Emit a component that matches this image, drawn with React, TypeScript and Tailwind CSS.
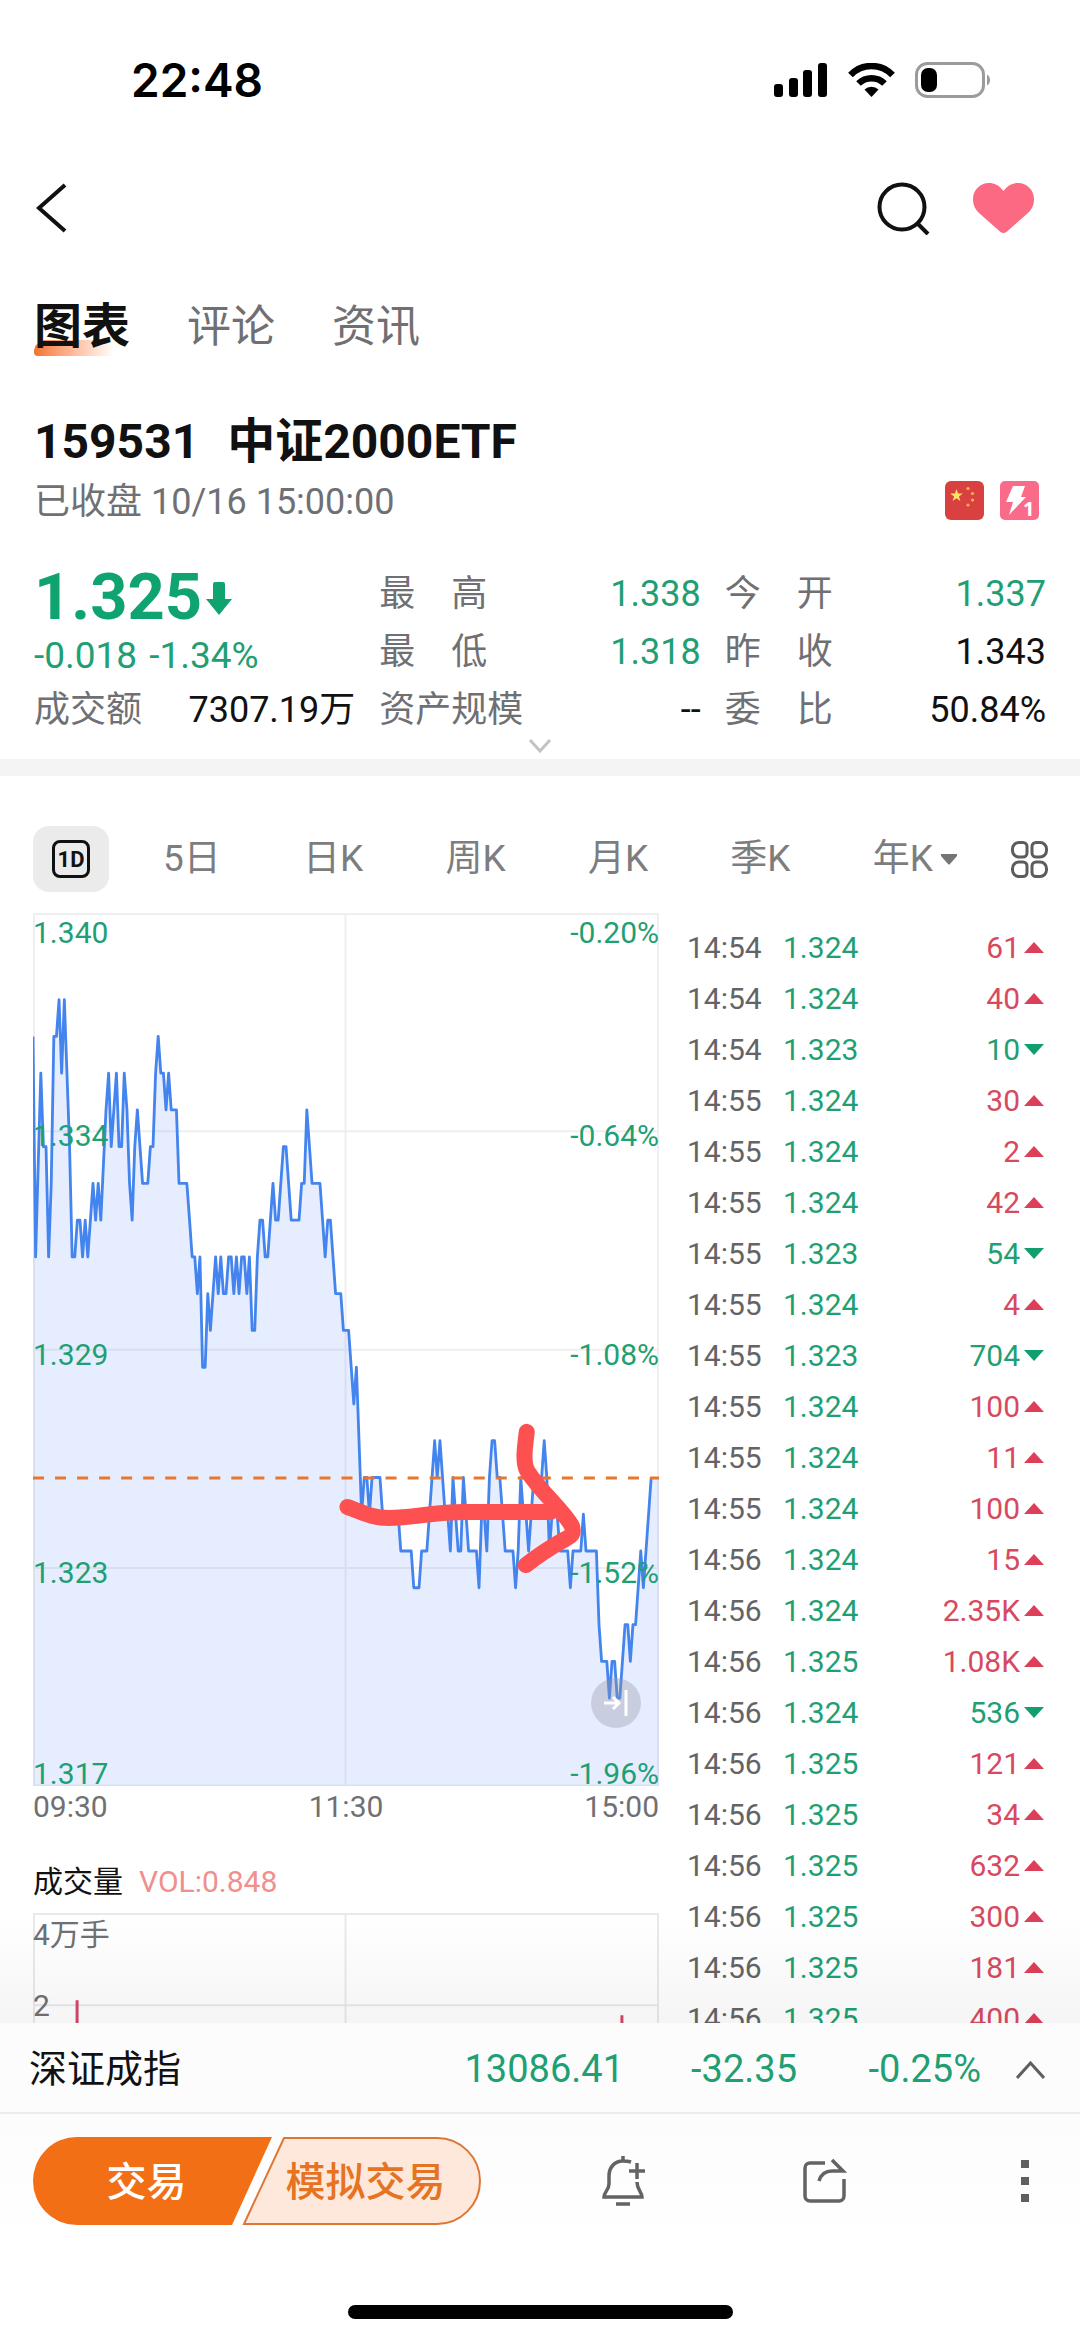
import React, { useState } from 'react';
import clsx from 'clsx';

// [minute, price in 0.001 above 1.300]
const PRICES: [number, number][] = [
  [0, 37], [1, 31], [3, 36], [4, 34], [5, 34], [6, 31], [7, 33], [8, 37], [9, 37], [10, 38], [11, 36], [12, 38],
  [14, 34], [15, 31], [16, 31], [17, 32], [18, 32], [19, 31], [20, 32], [21, 31], [23, 33], [24, 32], [25, 33],
  [26, 32], [28, 35], [29, 36], [30, 34], [32, 36], [33, 34], [34, 34], [35, 36], [36, 35], [37, 33], [38, 32],
  [39, 34], [40, 35], [41, 34], [42, 33], [44, 33], [45, 34], [46, 34], [47, 36], [48, 37], [49, 36], [50, 36],
  [51, 35], [52, 36], [53, 35], [55, 35], [56, 33], [59, 33], [60, 32], [61, 31], [62, 31], [63, 30], [64, 31],
  [65, 28], [66, 28], [67, 30], [68, 29], [69, 30], [70, 31], [71, 30], [72, 31], [73, 30], [74, 30], [75, 31],
  [76, 31], [77, 30], [78, 31], [79, 30], [80, 31], [81, 31], [82, 30], [83, 31], [84, 29], [85, 29], [86, 31],
  [87, 32], [88, 32], [89, 31], [90, 31], [91, 32], [92, 33], [93, 32], [94, 32], [95, 33], [96, 34], [97, 34],
  [98, 33], [99, 32], [102, 32], [103, 33], [104, 33], [105, 35], [106, 34], [107, 33], [110, 33], [111, 32],
  [112, 31], [113, 32], [114, 32], [115, 31], [116, 30], [118, 30], [119, 29], [121, 29], [122, 28], [123, 27],
  [124, 28], [126, 24], [127, 25], [128, 25], [129, 24], [130, 25], [133, 25], [134, 24], [140, 24], [141, 23],
  [145, 23], [146, 22], [148, 22], [149, 23], [151, 23], [152, 24], [153, 25], [154, 26], [155, 25], [156, 26],
  [157, 25], [158, 24], [159, 24], [160, 23], [161, 25], [162, 24], [163, 23], [164, 23], [165, 25], [166, 24],
  [167, 23], [170, 23], [171, 22], [172, 24], [173, 24], [174, 23], [175, 25], [176, 26], [177, 26], [178, 25],
  [179, 25], [180, 24], [181, 23], [184, 23], [185, 22], [186, 23], [187, 25], [188, 24], [189, 24], [190, 23],
  [191, 24], [192, 25], [195, 25], [196, 26], [197, 25], [198, 23], [199, 24], [201, 24], [202, 23], [205, 23],
  [206, 22], [207, 23], [210, 23], [211, 24], [212, 23], [216, 23], [217, 21], [218, 20], [220, 20], [221, 19],
  [222, 20], [223, 20], [224, 19], [225, 19], [226, 20], [227, 21], [228, 21], [229, 20], [230, 21], [231, 21],
  [232, 22], [233, 23], [234, 22], [235, 23], [236, 24], [237, 25], [240, 25],
];

const TRADES: [string, string, string, 'up' | 'down'][] = [
  ['14:54', '1.324', '61', 'up'],
  ['14:54', '1.324', '40', 'up'],
  ['14:54', '1.323', '10', 'down'],
  ['14:55', '1.324', '30', 'up'],
  ['14:55', '1.324', '2', 'up'],
  ['14:55', '1.324', '42', 'up'],
  ['14:55', '1.323', '54', 'down'],
  ['14:55', '1.324', '4', 'up'],
  ['14:55', '1.323', '704', 'down'],
  ['14:55', '1.324', '100', 'up'],
  ['14:55', '1.324', '11', 'up'],
  ['14:55', '1.324', '100', 'up'],
  ['14:56', '1.324', '15', 'up'],
  ['14:56', '1.324', '2.35K', 'up'],
  ['14:56', '1.325', '1.08K', 'up'],
  ['14:56', '1.324', '536', 'down'],
  ['14:56', '1.325', '121', 'up'],
  ['14:56', '1.325', '34', 'up'],
  ['14:56', '1.325', '632', 'up'],
  ['14:56', '1.325', '300', 'up'],
  ['14:56', '1.325', '181', 'up'],
  ['14:56', '1.325', '400', 'up'],
];

const AXIS = [
  { price: '1.340', pct: '-0.20%', pos: 'top-1' },
  { price: '1.334', pct: '-0.64%', pos: 'top-1/4 -translate-y-1/3' },
  { price: '1.329', pct: '-1.08%', pos: 'top-1/2 -translate-y-1/3' },
  { price: '1.323', pct: '-1.52%', pos: 'top-3/4 -translate-y-1/3' },
  { price: '1.317', pct: '-1.96%', pos: '-bottom-1' },
];

const PERIODS = ['5日', '日K', '周K', '月K', '季K', '年K'];

const CHART_W = 625;
const CHART_H = 872;

const StatusBar: React.FC = () => (
  <div className="flex h-[160px] shrink-0 items-center justify-between pl-[131px] pr-[89px]">
    <span className="font-['Inter',sans-serif] text-[46px] font-semibold text-black">22:48</span>
    <div className="flex items-center gap-5">
      <svg width="54" height="34" viewBox="0 0 54 34" fill="#000">
        <rect x="0" y="21" width="9" height="13" rx="3" />
        <rect x="15" y="15" width="9" height="19" rx="3" />
        <rect x="29" y="7" width="9" height="27" rx="3" />
        <rect x="44" y="0" width="9" height="34" rx="3" />
      </svg>
      <svg width="47" height="34" viewBox="0 0 47 34" fill="none" stroke="#000" strokeWidth="6.500">
        <path d="M2.500 12a29 29 0 0 1 42 0" />
        <path d="M10.500 20.500a18.500 18.500 0 0 1 26 0" />
        <path d="M23.500 34l-7-7.500a10 10 0 0 1 14 0z" fill="#000" stroke="none" />
      </svg>
      <svg width="76" height="36" viewBox="0 0 76 36" fill="none">
        <rect x="1.500" y="1.500" width="67" height="33" rx="11" stroke="#9b9b9b" strokeWidth="3" />
        <rect x="6" y="6" width="16" height="24" rx="7" fill="#000" />
        <path d="M72 12.500c4 2 4 9 0 11z" fill="#9b9b9b" />
      </svg>
    </div>
  </div>
);

const Header: React.FC = () => (
  <header className="flex h-24 shrink-0 items-center justify-between pl-[35px] pr-[46px]">
    <button aria-label="返回">
      <svg width="32" height="50" viewBox="0 0 32 50" fill="none" stroke="#111" strokeWidth="4">
        <path d="M30 2L4 25l26 23" />
      </svg>
    </button>
    <div className="flex items-center gap-[42px]">
      <button aria-label="搜索">
        <svg width="54" height="54" viewBox="0 0 54 54" fill="none" stroke="#111" strokeWidth="4">
          <circle cx="25" cy="26" r="22.500" />
          <path d="M40 42l11 11" />
        </svg>
      </button>
      <button aria-label="取消自选">
        <svg width="61" height="50" viewBox="0 0 61 50" fill="#fb6983">
          <path d="M30.500 8C26 2 21 0 16 0 7 0 0 7 0 16c0 6 2 10 6 14l21.500 19q3 2 6 0L55 30c4-4 6-8 6-14C61 7 54 0 45 0c-5 0-10 2-14.500 8z" />
        </svg>
      </button>
    </div>
  </header>
);

const PageTabs: React.FC = () => (
  <nav className="flex h-[142px] shrink-0 items-center gap-[57px] px-[34px] text-[44px] text-[#707072]">
    <button className="relative text-[48px] font-bold text-[#111]">
      <span className="absolute bottom-[7px] left-0 h-4 w-20 rounded-bl-[4px] rounded-tl-xl bg-gradient-to-r from-[#f2722b] to-white" />
      <span className="relative">图表</span>
    </button>
    <button>评论</button>
    <button>资讯</button>
  </nav>
);

interface QuoteProps {
  label: string;
  value: string;
  color?: string;
}

const Quote: React.FC<QuoteProps> = ({ label, value, color = 'text-[#111]' }) => (
  <div className="flex h-[58px] items-center justify-between">
    <dt className="whitespace-pre text-[#6f7074]">{label}</dt>
    <dd className={color}>{value}</dd>
  </div>
);

const Summary: React.FC = () => (
  <section className="px-[34px] pt-[14px] text-[36px]">
    <h1 className="flex gap-[28px] text-[48px] font-bold leading-[60px] text-[#111]">
      <span>159531</span>
      <span>中证2000ETF</span>
    </h1>
    <div className="flex h-[60px] items-center justify-between pr-[7px]">
      <span className="text-[#6f7074]">已收盘 10/16 15:00:00</span>
      <div className="flex gap-4 pb-1">
        <svg width="39" height="39" viewBox="0 0 39 39">
          <rect width="39" height="39" rx="6" fill="#d94040" />
          <path d="M11.500 8l1.500 4.600h4.800l-3.900 2.800 1.500 4.600-3.900-2.800-3.900 2.800 1.500-4.600-3.900-2.800H10z" fill="#ffe268" />
          <g fill="#f3b153">
            <circle cx="23" cy="7.500" r="1.600" />
            <circle cx="27.500" cy="12.500" r="1.600" />
            <circle cx="27.500" cy="19" r="1.600" />
            <circle cx="23" cy="24" r="1.600" />
          </g>
        </svg>
        <svg width="39" height="39" viewBox="0 0 39 39">
          <rect width="39" height="39" rx="5" fill="#f96b89" />
          <path d="M13 5h12l-4 11h5L9 34l4-13H6z" fill="#fff" />
          <text x="23" y="35" fill="#fff" fontSize="20" fontWeight="700" fontFamily="Noto Sans, sans-serif">1</text>
        </svg>
      </div>
    </div>
    <div className="mt-[33px] grid grid-cols-3 gap-x-6">
      <div>
        <div className="flex h-[66px] items-center gap-1 text-[65px] font-bold text-[#0fa36f]">
          <span>1.325</span>
          <svg width="26" height="33" viewBox="0 0 26 33" fill="#0fa36f">
            <path d="M9 0h8a2 2 0 0 1 2 2v15h7L13 33 0 17h7V2a2 2 0 0 1 2-2z" />
          </svg>
        </div>
        <div className="flex h-[50px] items-center gap-3 text-[37px] text-[#1f9f73]">
          <span>-0.018</span>
          <span>-1.34%</span>
        </div>
        <dl>
          <Quote label="成交额" value="7307.19万" />
        </dl>
      </div>
      <dl>
        <Quote label="最　高" value="1.338" color="text-[#1f9f73]" />
        <Quote label="最　低" value="1.318" color="text-[#1f9f73]" />
        <Quote label="资产规模" value="--" />
      </dl>
      <dl>
        <Quote label="今　开" value="1.337" color="text-[#1f9f73]" />
        <Quote label="昨　收" value="1.343" />
        <Quote label="委　比" value="50.84%" />
      </dl>
    </div>
    <button aria-label="展开" className="flex h-[20px] w-full items-start justify-center">
      <svg width="24" height="14" viewBox="0 0 24 14" fill="none" stroke="#c3c3c5" strokeWidth="3">
        <path d="M2 1l10 11L22 1" />
      </svg>
    </button>
  </section>
);

const PeriodBar: React.FC = () => {
  const [active, setActive] = useState('1D');

  return (
    <div className="flex items-center gap-[54px] pl-[33px] pr-[32px] pt-[50px]">
      <button
        aria-label="分时"
        onClick={() => setActive('1D')}
        className={clsx('flex h-[66px] w-[76px] items-center justify-center rounded-2xl', active === '1D' && 'bg-[#ebebec]')}
      >
        <span className="flex h-[38px] w-[38px] items-center justify-center rounded-lg border-3 border-[#111] text-[22px] font-bold text-[#111]">
          1D
        </span>
      </button>
      <div className="flex flex-1 items-center justify-between text-[37px] text-[#7d7d80]">
        {PERIODS.map((p) => (
          <button key={p} onClick={() => setActive(p)} className="flex items-center gap-2">
            {p}
            {p === '年K' && (
              <svg width="16" height="11" viewBox="0 0 16 11" fill="#757577">
                <path d="M1 0h14a1 1 0 0 1 1 2l-7 8q-1 1-2 0L0 2a1 1 0 0 1 1-2z" />
              </svg>
            )}
          </button>
        ))}
      </div>
      <button aria-label="更多图表">
        <svg width="37" height="37" viewBox="0 0 37 37" fill="none" stroke="#5c5c5e" strokeWidth="3">
          <path d="M8 1.500h4a4 4 0 0 1 4 4V12a4 4 0 0 1-4 4H8a6.500 6.500 0 0 1-6.500-6.500V8A6.500 6.500 0 0 1 8 1.500z" />
          <path d="M29 1.500h-4a4 4 0 0 0-4 4V12a4 4 0 0 0 4 4h4a6.500 6.500 0 0 0 6.500-6.500V8A6.500 6.500 0 0 0 29 1.500z" />
          <path d="M8 35.500h4a4 4 0 0 0 4-4V25a4 4 0 0 0-4-4H8a6.500 6.500 0 0 0-6.500 6.500V29A6.500 6.500 0 0 0 8 35.500z" />
          <path d="M29 35.500h-4a4 4 0 0 1-4-4V25a4 4 0 0 1 4-4h4a6.500 6.500 0 0 1 6.500 6.500V29a6.500 6.500 0 0 1-6.500 6.500z" />
        </svg>
      </button>
    </div>
  );
};

const PriceChart: React.FC = () => {
  const points = PRICES.map(([m, p]) => `${((m / 240) * CHART_W).toFixed(1)},${(86.5 + (38 - p) * 36.7).toFixed(1)}`);
  // the last minutes sit under the dashed price line
  const line = points.slice(0, -1).join(' ');

  return (
    <div className="relative">
      <svg viewBox={`0 0 ${CHART_W} ${CHART_H}`} className="block w-full" fill="none">
        <path d="M1 1H624V871H1zM312 1V871M1 218H624M1 436H624M1 654H624" stroke="#efeff0" strokeWidth="2" />
        <polygon points={`0,${CHART_H} ${points.join(' ')} ${CHART_W},${CHART_H}`} fill="#3f74f5" fillOpacity="0.13" />
        <polyline points={line} stroke="#4484ee" strokeWidth="2.8" strokeLinejoin="round" />
        <path d="M0 564H625" stroke="#e8762f" strokeWidth="3" strokeDasharray="11 11" />
      </svg>
      {AXIS.map((a) => (
        <div key={a.price} className={clsx('absolute inset-x-0 flex justify-between text-[30px] leading-8 text-[#1f9f73]', a.pos)}>
          <span>{a.price}</span>
          <span>{a.pct}</span>
        </div>
      ))}
      <button
        aria-label="跳到最新"
        className="absolute bottom-[58px] right-[18px] flex h-[50px] w-[50px] items-center justify-center rounded-full bg-[#8e96a8]/35"
      >
        <svg width="24" height="28" viewBox="0 0 24 28" fill="none" stroke="#fff" strokeWidth="3">
          <path d="M0 14h14M9 8l6 6-6 6M22 1v26" />
        </svg>
      </button>
      <svg viewBox={`0 0 ${CHART_W} ${CHART_H}`} className="pointer-events-none absolute inset-0 w-full" fill="none" stroke="#fd5050" strokeLinecap="round" strokeLinejoin="round">
        <path d="M314 593C332 600 340 604 355 604C380 604 400 598 430 598L517 598" strokeWidth="16" />
        <path d="M493 518C491 534 489 547 493 556C503 574 530 597 538 612C541 621 536 623 528 627C512 636 505 641 492 651" strokeWidth="16" />
      </svg>
    </div>
  );
};

const VolumeChart: React.FC = () => (
  <div className="relative text-[30px] leading-9 text-[#6f7074]">
    <svg viewBox="0 0 625 184" className="block w-full" fill="none">
      <path d="M1 184V1H624V184M312 1V184M1 92H624" stroke="#e9e9ea" strokeWidth="2" />
      <path d="M44 87V184M588 102V184" stroke="#d2486a" strokeWidth="3" />
    </svg>
    <span className="absolute left-0 top-1">4万手</span>
    <span className="absolute left-0 top-1/2 -translate-y-1/2">2</span>
  </div>
);

const TradeTable: React.FC = () => (
  <table className="mt-[9px] w-[360px] self-start text-[30px]">
    <tbody>
      {TRADES.map(([time, price, vol, dir], i) => (
        <tr key={i} className="h-[51px]">
          <td className="w-[96px] text-[#646466]">{time}</td>
          <td className="text-[#1f9f73]">{price}</td>
          <td className={dir === 'up' ? 'text-[#d8495f]' : 'text-[#1f9f73]'}>
            <div className="flex items-center justify-end gap-1 pr-[3px]">
              {vol}
              <svg width="20" height="11" viewBox="0 0 20 11" fill={dir === 'up' ? '#de3f58' : '#119f6d'}>
                <path d={dir === 'up' ? 'M10 0L20 11H0z' : 'M0 0H20L10 11z'} />
              </svg>
            </div>
          </td>
        </tr>
      ))}
    </tbody>
  </table>
);

const BottomBar: React.FC = () => (
  <footer className="relative shrink-0">
    <div className="pointer-events-none absolute inset-x-0 bottom-full h-[110px] bg-gradient-to-t from-black/4 to-transparent" />
    <div className="flex h-[91px] items-center gap-[55px] border-b-2 border-[#ececee] bg-[#fdfcfd] pl-[29px] pr-[35px] pt-1 text-[38px] text-[#1f9f73]">
      <span className="mr-auto text-[#111]">深证成指</span>
      <span>13086.41</span>
      <span className="min-w-[118px] text-right">-32.35</span>
      <span className="min-w-[129px] text-right">-0.25%</span>
      <button aria-label="展开指数" className="-ml-5">
        <svg width="29" height="18" viewBox="0 0 29 18" fill="none" stroke="#5f5f61" strokeWidth="3">
          <path d="M1 17L14.500 2 28 17" />
        </svg>
      </button>
    </div>
    <div className="flex h-[133px] items-center bg-gradient-to-b from-[#fdfcfd] to-white pl-[33px] pr-[33px] text-[40px] font-medium">
      <button className="relative h-[88px] w-[239px] pr-3 pt-1 text-white">
        <svg viewBox="0 0 239 88" className="absolute inset-0 h-full w-full" fill="#f26f16">
          <path d="M44 0H239L199 88H44A44 44 0 0 1 44 0z" />
        </svg>
        <span className="relative">交易</span>
      </button>
      <button className="relative -ml-[30px] h-[88px] w-[239px] pl-2 pt-1 text-[#e6731f]">
        <svg viewBox="0 0 239 88" className="absolute inset-0 h-full w-full" fill="#fde8db" stroke="#dd7633" strokeWidth="2">
          <path d="M42 1H195A43 43 0 0 1 195 87H2z" />
        </svg>
        <span className="relative">模拟交易</span>
      </button>
      <div className="ml-[121px] flex flex-1 justify-between">
        <button aria-label="提醒">
          <svg width="44" height="50" viewBox="0 0 44 50" fill="none" stroke="#636365" strokeWidth="3.500">
            <path d="M21 0v5M29 6C26 5 24 5 21 5C12 5 7 12 7 20v8C7 34 2 36 2 41h38C40 36 35 34 35 26" />
            <path d="M35 7v16M27 15h16M14 48h14" />
          </svg>
        </button>
        <button aria-label="分享">
          <svg width="44" height="50" viewBox="0 0 44 50" fill="none" stroke="#636365" strokeWidth="3.500">
            <path d="M22 7H7a5 5 0 0 0-5 5v28a5 5 0 0 0 5 5h29a5 5 0 0 0 5-5V23" />
            <path d="M16 25C18 18 22 15 29 15H40L29 4" />
          </svg>
        </button>
        <button aria-label="更多">
          <svg width="44" height="50" viewBox="0 0 44 50" fill="#5f5f61">
            <path d="M18 4h8v8h-8zM18 21h8v8h-8zM18 38h8v8h-8z" />
          </svg>
        </button>
      </div>
    </div>
    <div className="flex h-[94px] justify-center bg-white pt-[58px]">
      <div className="h-[14px] w-[385px] rounded-full bg-black" />
    </div>
  </footer>
);

const App: React.FC = () => {
  return (
    <div className="flex h-screen flex-col bg-white font-['Roboto','Noto_Sans_CJK_SC',sans-serif]">
      <StatusBar />
      <Header />
      <PageTabs />
      <main className="min-h-0 flex-1 overflow-hidden">
        <Summary />
        <div className="h-[17px] bg-[#f4f4f4]" />
        <PeriodBar />
        <div className="mt-[21px] flex gap-7 px-[33px]">
          <div className="min-w-0 flex-1">
            <PriceChart />
            <div className="flex h-[40px] items-center justify-between text-[30px] text-[#6f7074]">
              <span>09:30</span>
              <span>11:30</span>
              <span>15:00</span>
            </div>
            <div className="mt-[33px] flex h-[44px] items-center gap-4 text-[30px]">
              <span className="text-[#111]">成交量</span>
              <span className="text-[#f08f8c]">VOL:0.848</span>
            </div>
            <div className="mt-[10px]">
              <VolumeChart />
            </div>
          </div>
          <TradeTable />
        </div>
      </main>
      <BottomBar />
    </div>
  );
};

export default App;
